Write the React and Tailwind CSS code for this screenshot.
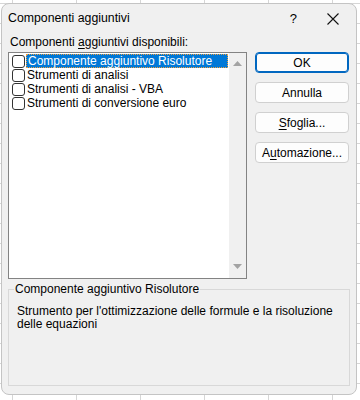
import React from "react";

const font = { fontFamily: '"Liberation Sans", Arial, sans-serif' };

function Check() {
  return <div className="w-[13px] h-[13px] shrink-0 rounded-[3px] border border-[#333333] bg-white" />;
}

function Row({ label, selected }) {
  return (
    <div className="flex h-[14px] items-center">
      <div className="w-[3px]" />
      <Check />
      <div
        className={
          selected
            ? "ml-[1px] flex h-[14px] w-[202px] items-center border border-dotted border-[#f0a040] bg-[#0078d7] pl-[1px] text-white"
            : "ml-[2px] flex h-[14px] items-center text-[#000]"
        }
      >
        <span className="leading-[13px]">{label}</span>
      </div>
    </div>
  );
}

function Btn({ children, primary }) {
  return (
    <div
      className={
        "flex h-[21px] w-[94px] items-center justify-center rounded-[4px] bg-[#fdfdfd] text-[12px] text-black " +
        (primary ? "border border-[#0067c0] shadow-[inset_0_0_0_1px_#0067c0]" : "border border-[#d0d0d0]")
      }
    >
      {children}
    </div>
  );
}

export default function App() {
  return (
    <div
      className="h-[400px] w-[360px] overflow-hidden bg-white bg-[linear-gradient(to_right,#d6d6d6_1px,transparent_1px),linear-gradient(to_bottom,#d6d6d6_1px,transparent_1px)] bg-[size:64px_20px] bg-[position:12px_3px] pl-[1px] pt-[3px]"
      style={font}
    >
      <div className="flex h-[392px] w-[356px] flex-col rounded-[8px] border border-[#c4c4c4] bg-[#f0f0f0] text-[12px] text-black">
        {/* title bar */}
        <div className="flex h-[29px] items-center pl-[6px]">
          <span className="text-[12.3px]">Componenti aggiuntivi</span>
          <span className="ml-auto mr-[30px] text-[13px]">?</span>
          <svg width="12" height="12" viewBox="0 0 12 12" className="mr-[17px]">
            <path d="M0.5 0.5 L11.5 11.5 M11.5 0.5 L0.5 11.5" stroke="#111" strokeWidth="1.1" />
          </svg>
        </div>
        <div className="flex flex-col px-[6px]">
          <div className="flex h-[18px] items-center pl-[2px]">
            Componenti&nbsp;<span className="underline underline-offset-2">a</span>ggiuntivi disponibili:
          </div>
          <div className="mt-[1px] flex">
            <div className="flex h-[227px] w-[239px] border border-[#838383] bg-white">
              <div className="flex flex-1 flex-col pt-[1px]">
                <Row label="Componente aggiuntivo Risolutore" selected />
                <Row label="Strumenti di analisi" />
                <Row label="Strumenti di analisi - VBA" />
                <Row label="Strumenti di conversione euro" />
              </div>
              <div className="flex w-[17px] flex-col items-center justify-between bg-[#f0f0f0] py-[8px]">
                <svg width="9" height="6" viewBox="0 0 9 6">
                  <path d="M4.5 0 L9 5 L0 5 Z" fill="#a3a3a3" />
                </svg>
                <svg width="9" height="6" viewBox="0 0 9 6">
                  <path d="M0 0 L9 0 L4.5 5 Z" fill="#a3a3a3" />
                </svg>
              </div>
            </div>
            <div className="ml-[8px] flex flex-col gap-[9px]">
              <Btn primary>OK</Btn>
              <Btn>Annulla</Btn>
              <Btn>
                <span className="underline underline-offset-2">S</span>foglia...
              </Btn>
              <Btn>
                A<span className="underline underline-offset-2">u</span>tomazione...
              </Btn>
            </div>
          </div>
          <div className="relative mt-[10px] h-[97px] w-[342px] border border-[#d8d8d8]">
            <span className="absolute left-[5px] top-[-9px] bg-[#f0f0f0] px-[1px] leading-[16px]">
              Componente aggiuntivo Risolutore
            </span>
            <div className="pl-[8px] pr-[6px] pt-[15px] leading-[13px]">
              <div className="whitespace-nowrap">Strumento per l'ottimizzazione delle formule e la risoluzione</div>
              <div>delle equazioni</div>
            </div>
          </div>
        </div>
      </div>
    </div>
  );
}
